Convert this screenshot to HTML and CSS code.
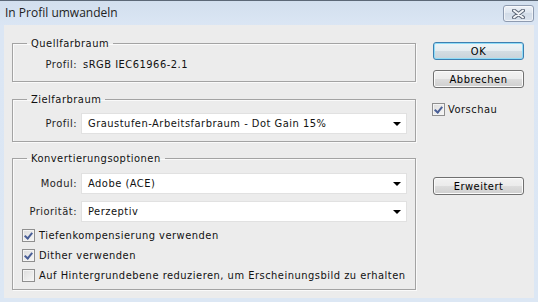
FILE: index.html
```html
<!DOCTYPE html>
<html lang="de">
<head>
<meta charset="utf-8">
<title>In Profil umwandeln</title>
<link rel="stylesheet" href="styles.css">
</head>
<body>
<div class="window">
  <div class="titlebar">
    <span class="title">In Profil umwandeln</span>
    <div class="close">
      <svg width="13" height="10" viewBox="0 0 13 10">
        <path d="M2 1.5 L11 8.5 M11 1.5 L2 8.5" stroke="#5d6778" stroke-width="4" stroke-linecap="round"/>
        <path d="M2 1.5 L11 8.5 M11 1.5 L2 8.5" stroke="#f4f6f9" stroke-width="2" stroke-linecap="round"/>
      </svg>
    </div>
  </div>
  <div class="client">
    <div class="main">
      <fieldset class="group g1">
        <legend>Quellfarbraum</legend>
        <div class="row">
          <span class="label">Profil:</span>
          <span class="value">sRGB IEC61966-2.1</span>
        </div>
      </fieldset>
      <fieldset class="group g2">
        <legend>Zielfarbraum</legend>
        <div class="row">
          <span class="label">Profil:</span>
          <div class="select"><span>Graustufen-Arbeitsfarbraum - Dot Gain 15%</span><span class="arrow"></span></div>
        </div>
      </fieldset>
      <fieldset class="group g3">
        <legend>Konvertierungsoptionen</legend>
        <div class="row">
          <span class="label">Modul:</span>
          <div class="select"><span>Adobe (ACE)</span><span class="arrow"></span></div>
        </div>
        <div class="row row2">
          <span class="label">Priorität:</span>
          <div class="select"><span>Perzeptiv</span><span class="arrow"></span></div>
        </div>
        <div class="checks">
          <div class="check"><span class="box checked"></span><span>Tiefenkompensierung verwenden</span></div>
          <div class="check"><span class="box checked"></span><span>Dither verwenden</span></div>
          <div class="check"><span class="box"></span><span>Auf Hintergrundebene reduzieren, um Erscheinungsbild zu erhalten</span></div>
        </div>
      </fieldset>
    </div>
    <div class="side">
      <div class="btn default">OK</div>
      <div class="btn">Abbrechen</div>
      <div class="check preview"><span class="box checked"></span><span>Vorschau</span></div>
      <div class="btn adv">Erweitert</div>
    </div>
  </div>
</div>
</body>
</html>
```

FILE: styles.css
```css
* { box-sizing: border-box; }
html, body { margin: 0; padding: 0; }
body {
  width: 538px;
  height: 302px;
  overflow: hidden;
  background: #dae5f3;
  font-family: "DejaVu Sans Condensed", "DejaVu Sans", sans-serif;
  font-size: 11px;
  letter-spacing: 0.5px;
  color: #111;
}
.window {
  width: 538px;
  height: 302px;
  display: flex;
  flex-direction: column;
  background: linear-gradient(#d2dfee, #dbe6f4 25px, #dce7f4);
  border-top: 1px solid #5c6877;
}
.titlebar {
  height: 24px;
  display: flex;
  justify-content: space-between;
  align-items: flex-start;
  padding: 0 4px 0 5px;
}
.title {
  font-family: "Open Sans", "Noto Sans", sans-serif;
  font-size: 12px;
  letter-spacing: 0;
  line-height: 16px;
  margin-top: 4px;
  color: #222;
}
.close {
  width: 31px;
  height: 17px;
  margin-top: 4px;
  border: 1px solid #8e9bb0;
  border-radius: 3px;
  background: linear-gradient(#eef2f8, #dde5ef 50%, #d2dce8 50%, #dbe3ee);
  box-shadow: inset 0 0 0 1px rgba(255,255,255,0.6);
  display: flex;
  align-items: center;
  justify-content: center;
}
.client {
  flex: 1;
  margin: 0 4px 4px;
  background: #ececec;
  display: flex;
  align-items: flex-start;
}
.main {
  padding: 12px 0 0 8px;
  width: 412px;
}
.group {
  margin: 0;
  padding: 0;
  width: 404px;
  border: 1px solid #a3a3a3;
  box-shadow: inset 1px 1px 0 #fafafa, 1px 1px 0 #fafafa;
}
.group legend {
  margin-left: 14px;
  padding: 0 4px;
  line-height: 13px;
  color: #111;
}
.g2 { margin-top: 11px; }
.g3 { margin-top: 10px; }
.row {
  display: flex;
  align-items: center;
}
.label {
  width: 64px;
  text-align: right;
  color: #222;
}
.g1 .row { margin-top: 7px; height: 14px; margin-bottom: 10px; }
.value { margin-left: 6px; }
.g2 .row { margin-top: 7px; margin-bottom: 7px; }
.g3 .row { margin-top: 8px; }
.g3 .row2 { margin-top: 7px; }
.select {
  margin-left: 4px;
  width: 326px;
  height: 21px;
  background: #fff;
  border: 1px solid #e1e1e1;
  display: flex;
  align-items: center;
  justify-content: space-between;
  padding: 0 5px 0 6px;
}
.arrow {
  width: 0;
  height: 0;
  border-left: 4px solid transparent;
  border-right: 4px solid transparent;
  border-top: 4px solid #000;
  margin-top: 1px;
}
.checks {
  display: flex;
  flex-direction: column;
  gap: 7px;
  margin: 7px 0 7px 9px;
}
.check {
  display: flex;
  align-items: center;
  height: 13px;
  gap: 4px;
}
.box {
  width: 13px;
  height: 13px;
  border: 1px solid #8f8f8f;
  background: linear-gradient(135deg, #dcdcdc, #f7f7f7);
  box-shadow: inset 0 0 0 1px #f4f4f4;
  flex: none;
  position: relative;
}
.box.checked::after {
  content: "";
  position: absolute;
  left: 3px;
  top: 1px;
  width: 3px;
  height: 6px;
  border-right: 2px solid #4a5f97;
  border-bottom: 2px solid #4a5f97;
  transform: rotate(40deg);
}
.side {
  margin-left: 17px;
  padding-top: 17px;
  display: flex;
  flex-direction: column;
  width: 91px;
}
.btn {
  width: 91px;
  height: 18px;
  border: 1px solid #707070;
  border-radius: 3px;
  background: linear-gradient(#f2f2f2, #ebebeb 50%, #dddddd 50%, #cfcfcf);
  box-shadow: inset 0 0 0 1px #fbfbfb;
  display: flex;
  align-items: center;
  justify-content: center;
  color: #000;
}
.btn.default {
  border-color: #3c7fb1;
  box-shadow: inset 0 0 0 1px #8fdcf7;
  background: linear-gradient(#eef4f7, #e4ecf0 50%, #d3dde3 50%, #c8d3da);
}
.btn + .btn { margin-top: 10px; }
.preview { margin-top: 15px; margin-left: -1px; gap: 3px; }
.btn.adv { margin-top: 61px; }
```
